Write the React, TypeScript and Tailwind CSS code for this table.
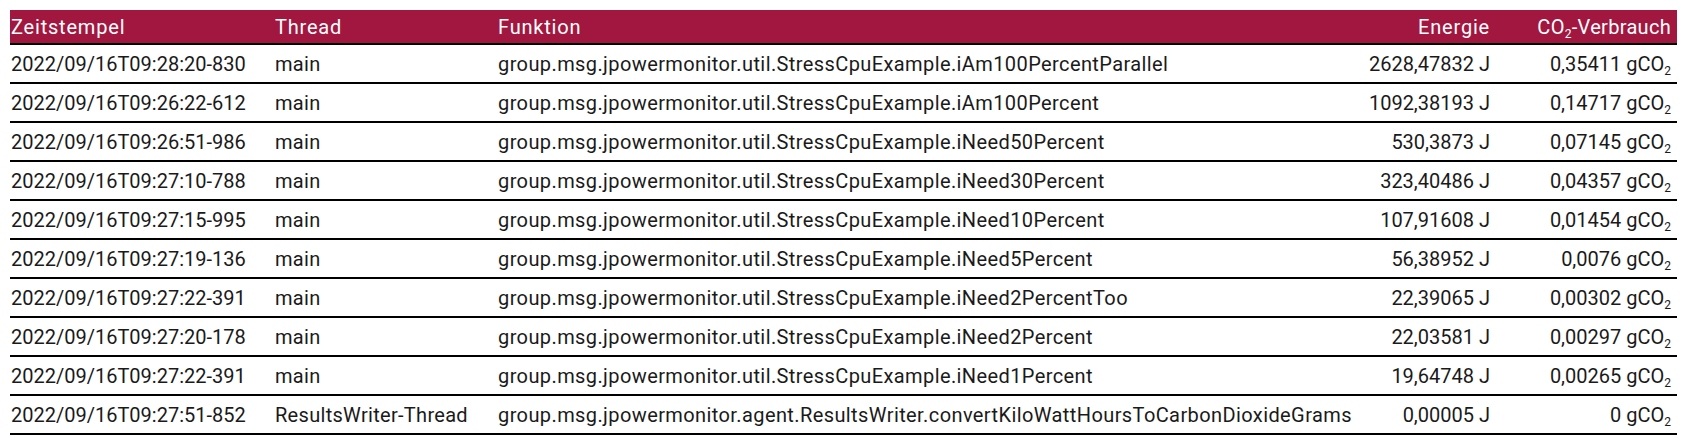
import React from 'react';

type Row = { ts: string; thread: string; fn: string; energy: string; co2: string };

const rows: Row[] = [
  { ts: '2022/09/16T09:28:20-830', thread: 'main', fn: 'group.msg.jpowermonitor.util.StressCpuExample.iAm100PercentParallel', energy: '2628,47832 J', co2: '0,35411' },
  { ts: '2022/09/16T09:26:22-612', thread: 'main', fn: 'group.msg.jpowermonitor.util.StressCpuExample.iAm100Percent', energy: '1092,38193 J', co2: '0,14717' },
  { ts: '2022/09/16T09:26:51-986', thread: 'main', fn: 'group.msg.jpowermonitor.util.StressCpuExample.iNeed50Percent', energy: '530,3873 J', co2: '0,07145' },
  { ts: '2022/09/16T09:27:10-788', thread: 'main', fn: 'group.msg.jpowermonitor.util.StressCpuExample.iNeed30Percent', energy: '323,40486 J', co2: '0,04357' },
  { ts: '2022/09/16T09:27:15-995', thread: 'main', fn: 'group.msg.jpowermonitor.util.StressCpuExample.iNeed10Percent', energy: '107,91608 J', co2: '0,01454' },
  { ts: '2022/09/16T09:27:19-136', thread: 'main', fn: 'group.msg.jpowermonitor.util.StressCpuExample.iNeed5Percent', energy: '56,38952 J', co2: '0,0076' },
  { ts: '2022/09/16T09:27:22-391', thread: 'main', fn: 'group.msg.jpowermonitor.util.StressCpuExample.iNeed2PercentToo', energy: '22,39065 J', co2: '0,00302' },
  { ts: '2022/09/16T09:27:20-178', thread: 'main', fn: 'group.msg.jpowermonitor.util.StressCpuExample.iNeed2Percent', energy: '22,03581 J', co2: '0,00297' },
  { ts: '2022/09/16T09:27:22-391', thread: 'main', fn: 'group.msg.jpowermonitor.util.StressCpuExample.iNeed1Percent', energy: '19,64748 J', co2: '0,00265' },
  { ts: '2022/09/16T09:27:51-852', thread: 'ResultsWriter-Thread', fn: 'group.msg.jpowermonitor.agent.ResultsWriter.convertKiloWattHoursToCarbonDioxideGrams', energy: '0,00005 J', co2: '0' },
];

const Co2 = () => (
  <span>
    CO<sub className="text-[12px] relative top-[4px] align-baseline">2</sub>
  </span>
);

export default function App() {
  return (
    <div className="bg-white w-[1689px] h-[448px] pt-[10px] pl-[10px]" style={{ fontFamily: 'Roboto, "Liberation Sans", sans-serif' }}>
      <table className="w-[1667px] border-collapse text-[20px] text-[#1a1a1a] table-fixed">
        <colgroup>
          <col className="w-[265px]" />
          <col className="w-[223px]" />
          <col />
          <col className="w-[160px]" />
          <col className="w-[181px]" />
        </colgroup>
        <thead>
          <tr className="bg-[#a2173f] text-white border-b-2 border-black">
            <th className="h-[34px] text-left font-normal pl-px tracking-[0.8px]">Zeitstempel</th>
            <th className="text-left font-normal tracking-[0.8px]">Thread</th>
            <th className="text-left font-normal tracking-[0.8px]">Funktion</th>
            <th className="text-right font-normal pr-1.5 tracking-[0.8px]">Energie</th>
            <th className="text-right font-normal pr-1.5 whitespace-nowrap tracking-[0.3px]">
              <Co2 />-Verbrauch
            </th>
          </tr>
        </thead>
        <tbody>
          {rows.map((r, i) => (
            <tr key={i} className="border-b-2 border-black">
              <td className="h-[39px] pl-px whitespace-nowrap">{r.ts}</td>
              <td className="whitespace-nowrap tracking-[0.3px]">{r.thread}</td>
              <td className="whitespace-nowrap tracking-[0.4px]">{r.fn}</td>
              <td className="text-right pr-1.5 whitespace-nowrap">{r.energy}</td>
              <td className="text-right pr-1.5 whitespace-nowrap">
                {r.co2} g<Co2 />
              </td>
            </tr>
          ))}
        </tbody>
      </table>
    </div>
  );
}
